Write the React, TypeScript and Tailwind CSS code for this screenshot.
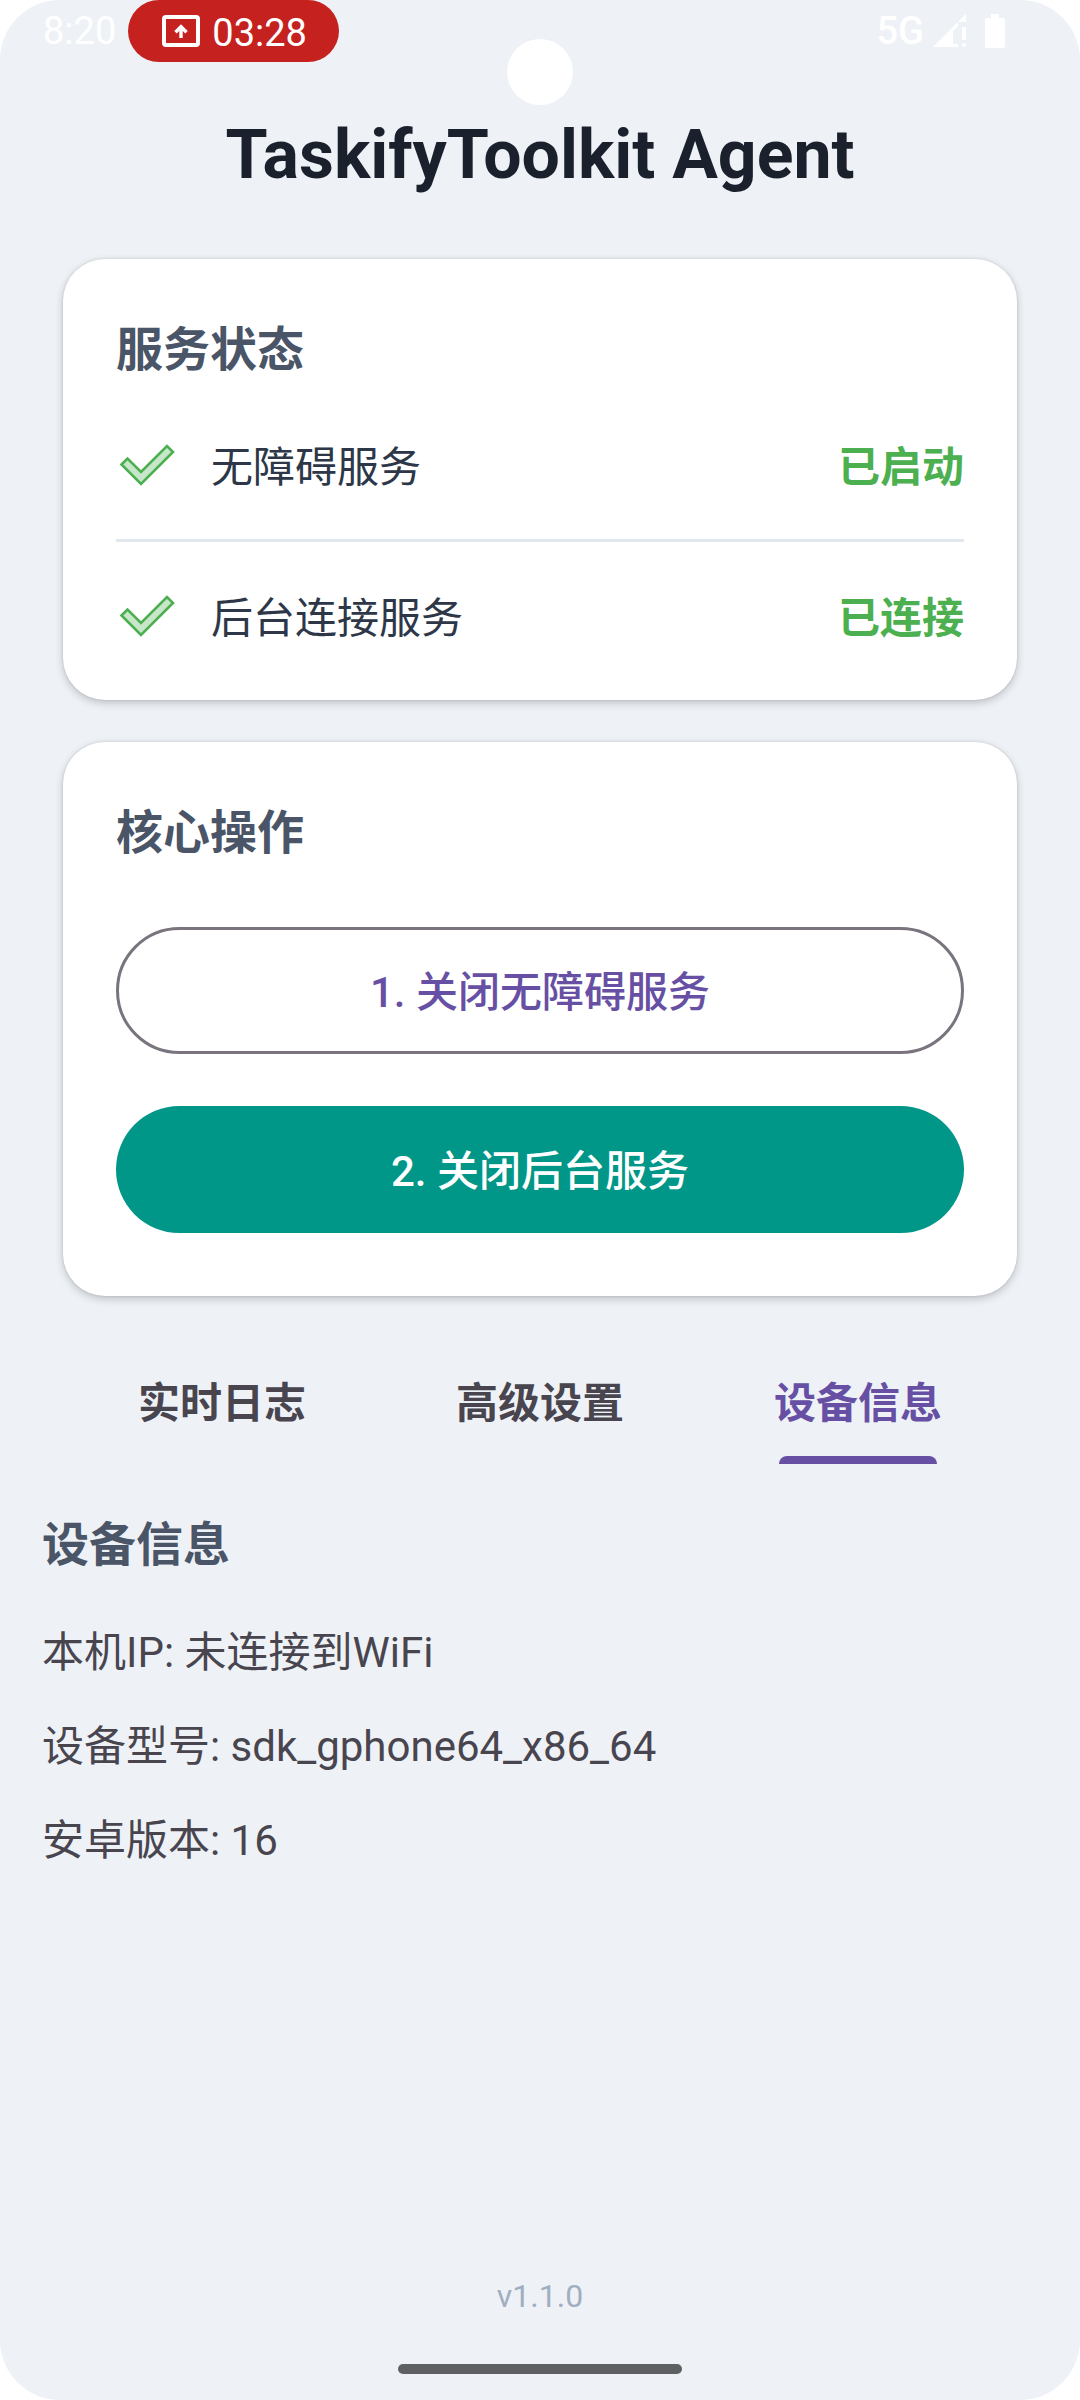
type StatusRow = { label: string; value: string };

const services: StatusRow[] = [
  { label: "无障碍服务", value: "已启动" },
  { label: "后台连接服务", value: "已连接" },
];

const tabs = ["实时日志", "高级设置", "设备信息"];

const deviceInfo = ["本机IP: 未连接到WiFi", "设备型号: sdk_gphone64_x86_64", "安卓版本: 16"];

function CheckIcon() {
  return (
    <svg className="h-16 w-16 shrink-0" viewBox="0 0 64 64" fill="none" aria-hidden="true">
      <path
        d="M5.5 28.5L11.5 22.5L25 36L51 10L57 16L25 48Z"
        fill="#C8E6C9"
        stroke="#4CAF50"
        strokeWidth="2.6"
      />
    </svg>
  );
}

function CastIcon() {
  return (
    <svg className="h-8 w-[38px]" viewBox="0 0 38 32" fill="none" aria-hidden="true">
      <rect x="2" y="2" width="34" height="28" rx="2" stroke="#fff" strokeWidth="4" />
      <path d="M19 23V12M13.5 17.2L19 11.7L24.5 17.2" stroke="#fff" strokeWidth="3.4" />
    </svg>
  );
}

function SignalIcon() {
  return (
    <svg className="h-[34px] w-[34px]" viewBox="0 0 34 34" fill="#fff" aria-hidden="true">
      <path d="M0 33L33 0V8H25V12L20 17V30H25V33Z" />
      <path d="M29 13H33V26H29Z" />
      <circle cx="31" cy="31" r="2" />
    </svg>
  );
}

function BatteryIcon() {
  return (
    <svg className="h-[34px] w-5" viewBox="0 0 20 34" fill="#fff" aria-hidden="true">
      <path d="M6 0H14V4H18Q20 4 20 6V32Q20 34 18 34H2Q0 34 0 32V6Q0 4 2 4H6Z" />
    </svg>
  );
}

function StatusBar() {
  return (
    <header className="relative flex h-[62px] items-start justify-between pr-[75px] pl-[43px] text-[38px] leading-[62px] text-white">
      <div className="flex items-center gap-3">
        <span>8:20</span>
        <span className="flex h-[62px] items-center gap-3 rounded-full bg-[#C5221F] pr-8 pl-[34px]">
          <CastIcon />
          <span className="pt-1">03:28</span>
        </span>
      </div>
      <div className="flex items-center">
        <span className="font-medium">5G</span>
        <span className="ml-[9px]">
          <SignalIcon />
        </span>
        <span className="ml-[18px]">
          <BatteryIcon />
        </span>
      </div>
      <div className="absolute top-[39px] left-1/2 size-[66px] -translate-x-1/2 rounded-full bg-white" />
    </header>
  );
}

const card =
  "mx-[63px] rounded-[42px] bg-white px-[53px] pt-14 shadow-[0_3px_8px_rgba(0,0,0,0.2),0_0_3px_rgba(0,0,0,0.12)]";

const heading = "text-[47px] leading-[70px] font-bold text-[#4A5568]";

export default function App() {
  return (
    <div className="bg-white">
      <div className="flex min-h-screen flex-col rounded-[60px] bg-[#EEF2F7] font-['Roboto','Noto_Sans_CJK_SC',sans-serif]">
        <StatusBar />
        <h1 className="mt-[53px] text-center text-[68px] leading-[80px] font-bold text-[#1A202C]">
          TaskifyToolkit Agent
        </h1>

        <main className="flex flex-col">
          <section className={`${card} mt-16 pb-2`}>
            <h2 className={heading}>服务状态</h2>
            <ul className="mt-[7px]">
              {services.map((s) => (
                <li
                  key={s.label}
                  className="flex h-[150px] items-center border-[#E2E8F0] pt-1 text-[42px] leading-[62px] not-last:border-b-3"
                >
                  <CheckIcon />
                  <span className="ml-[31px] grow text-[#2D3748]">{s.label}</span>
                  <span className="font-bold text-[#4CAF50]">{s.value}</span>
                </li>
              ))}
            </ul>
          </section>

          <section className={`${card} mt-[42px] pb-[63px]`}>
            <h2 className={heading}>核心操作</h2>
            <button
              type="button"
              className="mt-[59px] block h-[127px] w-full rounded-full border-3 border-[#79747E] pt-1 text-[42px] font-medium text-[#6750A4]"
            >
              1. 关闭无障碍服务
            </button>
            <button
              type="button"
              className="mt-[52px] block h-[127px] w-full rounded-full bg-[#009688] pt-1 text-[42px] font-medium text-white"
            >
              2. 关闭后台服务
            </button>
          </section>

          <div role="tablist" className="mx-[63px] mt-[42px] grid h-[126px] grid-cols-3">
            {tabs.map((t) => {
              const active = t === "设备信息";
              return (
                <button
                  key={t}
                  type="button"
                  role="tab"
                  aria-selected={active}
                  className={`relative pt-1 text-[42px] font-bold ${active ? "text-[#6750A4]" : "text-[#49454F]"}`}
                >
                  {t}
                  {active && (
                    <span className="absolute bottom-0 left-1/2 h-2 w-[158px] -translate-x-1/2 rounded-t-lg bg-[#6750A4]" />
                  )}
                </button>
              );
            })}
          </div>

          <section role="tabpanel" className="mt-[46px] px-[42px]">
            <h2 className={heading}>设备信息</h2>
            <div className="mt-[42px] flex flex-col gap-8 text-[42px] leading-[62px] text-[#49454F]">
              {deviceInfo.map((line) => (
                <p key={line}>{line}</p>
              ))}
            </div>
          </section>
        </main>

        <footer className="mt-auto flex flex-col items-center pb-[26px]">
          <p className="text-[32px] leading-[38px] text-[#A0AEC0]">v1.1.0</p>
          <div className="mt-[49px] h-[10px] w-[284px] rounded-full bg-[#5F6062]" />
        </footer>
      </div>
    </div>
  );
}
